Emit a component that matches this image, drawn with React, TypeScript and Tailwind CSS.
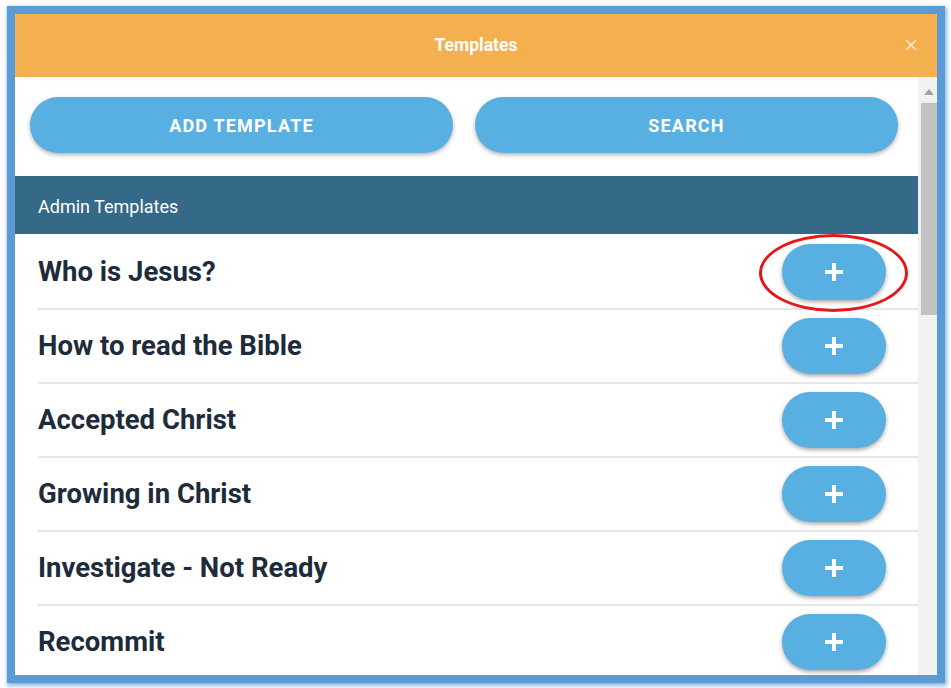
import React from 'react'

/* Templates modal — admin template list with add buttons */

const templates = [
  'Who is Jesus?',
  'How to read the Bible',
  'Accepted Christ',
  'Growing in Christ',
  'Investigate - Not Ready',
  'Recommit',
]

const PlusIcon = () => (
  <svg width="20" height="20" viewBox="0 0 20 20">
    <rect x="8" y="1" width="4" height="18" fill="white" />
    <rect x="1" y="8" width="18" height="4" fill="white" />
  </svg>
)

export default function App() {
  return (
    <div className="h-[688px] w-[951px] overflow-hidden bg-white pl-[7px] pt-[6px] font-['Roboto',sans-serif]">
      <div className="flex h-[677px] w-[938px] flex-col border-8 border-[#5B9BD5] bg-white shadow-[1px_2px_4px_1px_rgba(91,155,213,0.7)]">
        {/* header */}
        <div className="relative flex h-[63px] shrink-0 items-center justify-center bg-[#F4B04F]">
          <h1 className="text-[17.5px] font-bold text-white">Templates</h1>
          <svg className="absolute right-[20px] top-[25px]" width="12" height="12" viewBox="0 0 12 12">
            <path d="M1 1 L11 11 M11 1 L1 11" stroke="#fdebd0" strokeWidth="1.6" />
          </svg>
        </div>

        <div className="flex min-h-0 flex-1">
          {/* list column */}
          <div className="min-w-0 flex-1 overflow-hidden">
            <div className="grid grid-cols-2 gap-[22px] pl-[15px] pr-[20px] pt-[20px]">
              <button className="h-[56px] rounded-full bg-[#58B0E2] text-[18px] font-bold tracking-[1.2px] text-white shadow-[0_2px_4px_rgba(0,0,0,0.3)]">
                ADD TEMPLATE
              </button>
              <button className="h-[56px] rounded-full bg-[#58B0E2] text-[18px] font-bold tracking-[1.2px] text-white shadow-[0_2px_4px_rgba(0,0,0,0.3)]">
                SEARCH
              </button>
            </div>

            <div className="mt-[23px] flex h-[58px] items-center bg-[#346A87] pl-[23px] pt-[3px] text-[18px] text-white">
              Admin Templates
            </div>

            <ul className="pl-[23px] pt-[2px]">
              {templates.map((t, i) => (
                <li
                  key={t}
                  className="flex h-[74px] items-center justify-between border-b-2 border-[#E6E6E6] pr-[32px]"
                >
                  <span className="text-[27.5px] font-bold text-[#1E2B3A]">{t}</span>
                  <div className="relative">
                    <button className="flex h-[56px] w-[104px] items-center justify-center rounded-full bg-[#58B0E2] shadow-[0_2px_4px_rgba(0,0,0,0.35)]">
                      <PlusIcon />
                    </button>
                    {i === 0 && (
                      <div className="absolute left-[-23px] top-[-10px] h-[78px] w-[149px] rounded-[50%] border-[3px] border-[#E8161A]" />
                    )}
                  </div>
                </li>
              ))}
            </ul>
          </div>

          {/* scrollbar */}
          <div className="flex w-[19px] shrink-0 flex-col bg-[#F1F1F1] pl-[3px]">
            <div className="flex h-[26px] items-center justify-center pt-[3px]">
              <svg width="10" height="6" viewBox="0 0 10 6">
                <path d="M5 0 L10 6 L0 6 Z" fill="#A3A3A3" />
              </svg>
            </div>
            <div className="h-[212px] bg-[#C1C1C1]" />
          </div>
        </div>
      </div>
    </div>
  )
}
